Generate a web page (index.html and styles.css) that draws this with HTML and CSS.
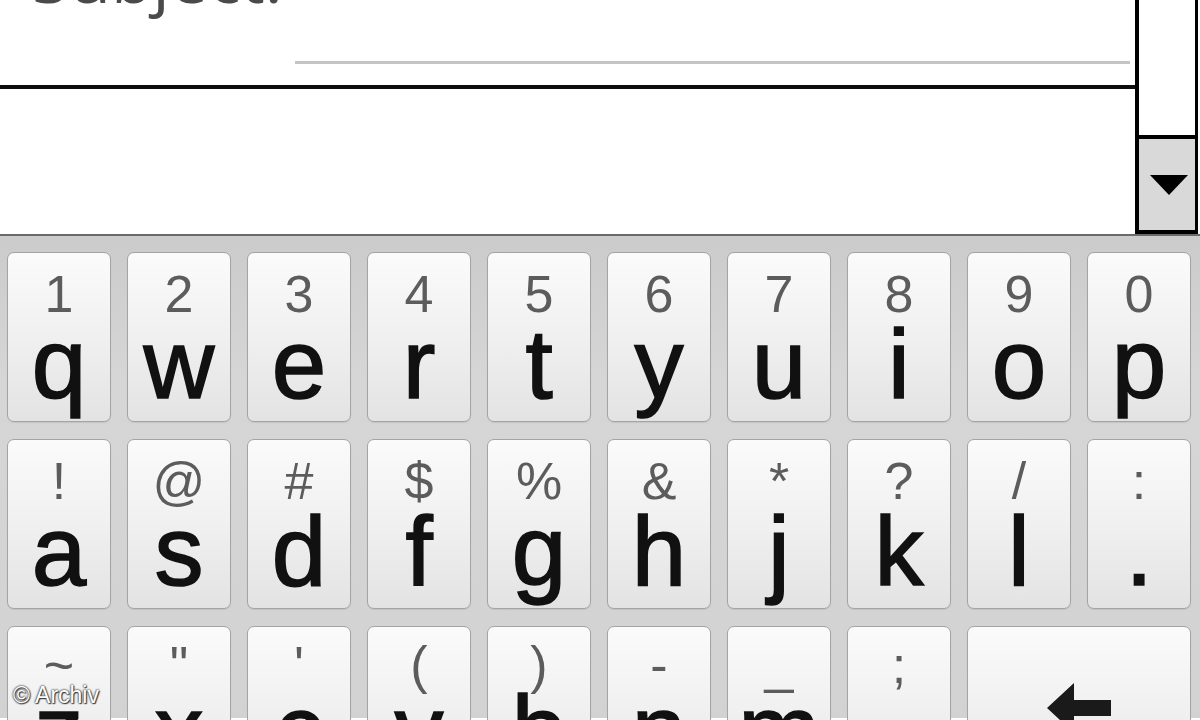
FILE: index.html
```html
<!DOCTYPE html>
<html lang="en">
<head>
<meta charset="UTF-8">
<meta name="viewport" content="width=device-width, initial-scale=1.0">
<title>Compose</title>
<link rel="stylesheet" href="styles.css">
</head>
<body>

<div class="compose">
    <div class="fields">
        <div class="subject-row">
            <div class="subject-label">Subject:</div>
            <div class="subject-field"></div>
        </div>
        <div class="message"></div>
    </div>
    <div class="scrollbar">
        <div class="scroll-track"></div>
        <div class="scroll-down">
            <svg width="38" height="20" viewBox="0 0 38 20"><polygon points="0,0 38,0 19,20" fill="#000"/></svg>
        </div>
    </div>
</div>

<div class="keyboard">
    <div class="key"><span class="sub">1</span><span class="main">q</span></div>
    <div class="key"><span class="sub">2</span><span class="main">w</span></div>
    <div class="key"><span class="sub">3</span><span class="main">e</span></div>
    <div class="key"><span class="sub">4</span><span class="main">r</span></div>
    <div class="key"><span class="sub">5</span><span class="main">t</span></div>
    <div class="key"><span class="sub">6</span><span class="main">y</span></div>
    <div class="key"><span class="sub">7</span><span class="main">u</span></div>
    <div class="key"><span class="sub">8</span><span class="main">i</span></div>
    <div class="key"><span class="sub">9</span><span class="main">o</span></div>
    <div class="key"><span class="sub">0</span><span class="main">p</span></div>

    <div class="key"><span class="sub">!</span><span class="main">a</span></div>
    <div class="key"><span class="sub">@</span><span class="main">s</span></div>
    <div class="key"><span class="sub">#</span><span class="main">d</span></div>
    <div class="key"><span class="sub">$</span><span class="main">f</span></div>
    <div class="key"><span class="sub">%</span><span class="main">g</span></div>
    <div class="key"><span class="sub">&amp;</span><span class="main">h</span></div>
    <div class="key"><span class="sub">*</span><span class="main">j</span></div>
    <div class="key"><span class="sub">?</span><span class="main">k</span></div>
    <div class="key"><span class="sub">/</span><span class="main">l</span></div>
    <div class="key"><span class="sub">:</span><span class="main">.</span></div>

    <div class="key low"><span class="sub">~</span><span class="main">z</span></div>
    <div class="key low"><span class="sub">"</span><span class="main">x</span></div>
    <div class="key low"><span class="sub">'</span><span class="main">c</span></div>
    <div class="key low"><span class="sub">(</span><span class="main">v</span></div>
    <div class="key low"><span class="sub">)</span><span class="main">b</span></div>
    <div class="key low"><span class="sub">-</span><span class="main">n</span></div>
    <div class="key low"><span class="sub">_</span><span class="main">m</span></div>
    <div class="key low"><span class="sub">;</span><span class="main">,</span></div>
    <div class="key backspace">
        <svg width="64" height="50" viewBox="0 0 64 50"><polygon points="0,25 27,0 27,17 64,17 64,33 27,33 27,50" fill="#1a1a1a"/></svg>
    </div>
</div>

<div class="credit">© Archiv</div>

</body>
</html>
```

FILE: styles.css
```css
html, body {
    margin: 0;
    padding: 0;
    height: 720px;
    overflow: hidden;
    background: #fff;
    font-family: "Liberation Sans", Arial, sans-serif;
}

.compose {
    display: flex;
    height: 234px;
    padding-right: 2px;
}

.fields {
    flex: 1;
    display: flex;
    flex-direction: column;
}

.subject-row {
    display: flex;
    align-items: flex-start;
    height: 85px;
    border-bottom: 4px solid #0d0d0d;
    overflow: hidden;
}

.subject-label {
    width: 263px;
    padding-left: 32px;
    margin-top: -55px;
    font-family: "Open Sans", sans-serif;
    font-size: 68px;
    line-height: 64px;
    color: #4a4a4a;
}

.subject-field {
    flex: 1;
    height: 64px;
    box-sizing: border-box;
    border-bottom: 3px solid #c4c4c4;
    margin-right: 5px;
}

.message {
    flex: 1;
}

.scrollbar {
    width: 56px;
    border-left: 4px solid #000;
    border-right: 3px solid #000;
    border-bottom: 4px solid #000;
    display: flex;
    flex-direction: column;
}

.scroll-track {
    height: 135px;
    border-bottom: 4px solid #000;
    background: #fff;
}

.scroll-down {
    flex: 1;
    background: #d9d9d9;
    display: flex;
    justify-content: center;
    align-items: center;
    padding-left: 3px;
}

/* keyboard */
.keyboard {
    border-top: 2px solid #6a6a6a;
    height: 484px;
    box-sizing: border-box;
    background: linear-gradient(#cbcbcb, #d6d6d6 30%, #d2d2d2);
    display: grid;
    grid-template-columns: repeat(10, 104px);
    grid-auto-rows: 170px;
    column-gap: 16px;
    row-gap: 17px;
    padding: 16px 0 0 7px;
}

.key {
    border: 1px solid #a4a4a4;
    border-radius: 7px;
    background: linear-gradient(#fbfbfb, #f0f0f0 50%, #e3e3e3);
    box-shadow: 0 1px 1px rgba(0,0,0,0.08);
    display: flex;
    flex-direction: column;
    align-items: center;
    padding-top: 15px;
}

.key .sub {
    font-size: 52px;
    line-height: 52px;
    color: #5c5c5c;
}

.key .main {
    font-size: 98px;
    line-height: 98px;
    color: #111;
    -webkit-text-stroke: 1.6px #111;
    margin-top: -5px;
}

.key.low {
    padding-top: 12px;
}

.key.low .main {
    margin-top: -10px;
}

.key.backspace {
    grid-column: span 2;
    padding-top: 56px;
}

.credit {
    position: absolute;
    left: 13px;
    bottom: 11px;
    font-size: 23px;
    color: #fff;
    text-shadow: 0 0 2px #333, 0 0 2px #333, 1px 1px 1px #444;
}
```
